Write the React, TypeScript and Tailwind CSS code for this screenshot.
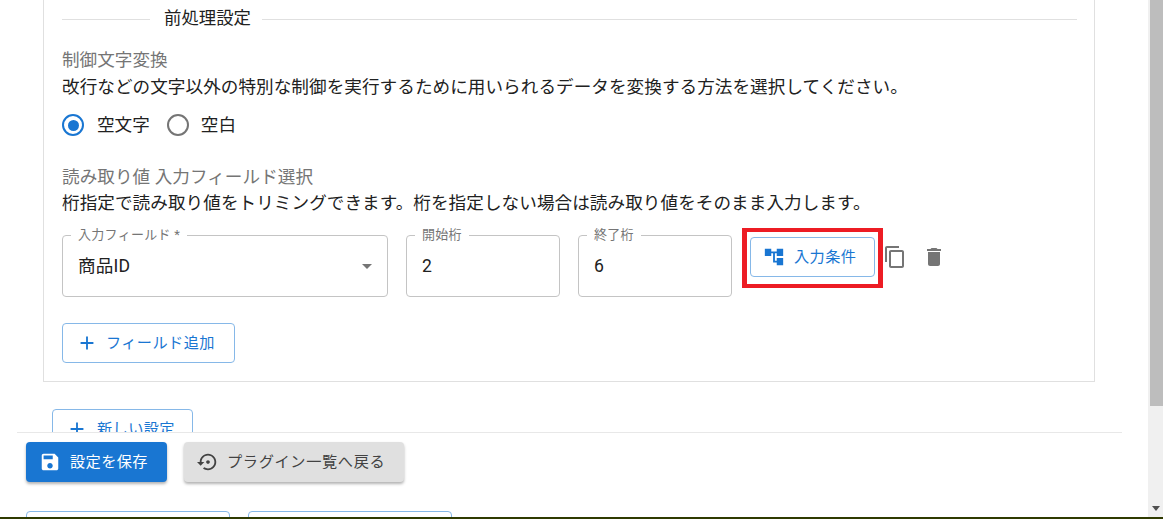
const font = '"Roboto", "Noto Sans CJK JP", sans-serif';

function MuiIcon({ d, className }: { d: string; className: string }) {
  return (
    <svg viewBox="0 0 24 24" fill="currentColor" className={className}>
      <path d={d} />
    </svg>
  );
}

const ADD = 'M19 13h-6v6h-2v-6H5v-2h6V5h2v6h6v2z';
const TREE = 'M22 11V3h-7v3H9V3H2v8h7V8h2v10h4v3h7v-8h-7v3h-2V8h2v3z';
const COPY =
  'M16 1H4c-1.1 0-2 .9-2 2v14h2V3h12V1zm3 4H8c-1.1 0-2 .9-2 2v14c0 1.1.9 2 2 2h11c1.1 0 2-.9 2-2V7c0-1.1-.9-2-2-2zm0 16H8V7h11v14z';
const TRASH = 'M6 19c0 1.1.9 2 2 2h8c1.1 0 2-.9 2-2V7H6v12zM19 4h-3.5l-1-1h-5l-1 1H5v2h14V4z';
const SAVE =
  'M17 3H5c-1.11 0-2 .9-2 2v14c0 1.1.89 2 2 2h14c1.1 0 2-.9 2-2V7l-4-4zm-5 16c-1.66 0-3-1.34-3-3s1.34-3 3-3 3 1.34 3 3-1.34 3-3 3zm3-10H5V5h10v4z';
const RESTORE =
  'M14 12c0-1.1-.9-2-2-2s-2 .9-2 2 .9 2 2 2 2-.9 2-2zm-2-9c-4.97 0-9 4.03-9 9H0l4 4 4-4H5c0-3.87 3.13-7 7-7s7 3.13 7 7-3.13 7-7 7c-1.51 0-2.91-.49-4.06-1.3l-1.42 1.44C8.04 20.3 9.94 21 12 21c4.97 0 9-4.03 9-9s-4.03-9-9-9z';

function Field({
  label,
  value,
  width,
  select,
}: {
  label: string;
  value: string;
  width: string;
  select?: boolean;
}) {
  return (
    <div className={`relative flex h-[62px] shrink-0 items-center rounded border border-[#c4c4c4] pb-[1px] pl-[15px] ${width}`}>
      <span className="absolute -top-[9px] left-[8px] bg-white px-[7px] text-[13px] leading-[16px] tracking-[0.3px] whitespace-nowrap text-[#757575]">
        {label}
      </span>
      <span className="text-[17.6px] leading-6 tracking-[0.15px] text-[#212121]">{value}</span>
      {select && (
        <MuiIcon d="M7 10l5 5 5-5z" className="absolute top-[18px] right-[8px] h-6 w-6 text-[#757575]" />
      )}
    </div>
  );
}

export default function App() {
  return (
    <div className="flex h-[519px] w-[1163px] flex-col overflow-hidden bg-white" style={{ fontFamily: font }}>
      <div className="flex min-h-0 flex-1">
        <div className="relative min-w-0 flex-1 overflow-hidden">
          <section className="mr-[53px] ml-[43px] h-[382px] border-x border-b border-[#e0e0e0] pl-[18px] pr-[17px]">
            <div className="flex h-[38px] items-center gap-[11px] pb-[1px] text-[17.4px] text-[#212121]">
              <div className="mt-[2px] h-px w-[88px] bg-[#e0e0e0]" />
              <span className="ml-[3px] whitespace-nowrap">前処理設定</span>
              <div className="mt-[2px] h-px flex-1 bg-[#e0e0e0]" />
            </div>
            <div className="mt-[9px] text-[17.6px] leading-[26px] whitespace-nowrap text-[#757575]">制御文字変換</div>
            <div className="text-[17.6px] leading-[28px] tracking-[0.05px] whitespace-nowrap text-[#212121]">
              改行などの文字以外の特別な制御を実行するために用いられるデータを変換する方法を選択してください。
            </div>
            <div className="mt-[3px] flex h-[42px] items-center text-[17.6px] text-[#212121]">
              <span className="flex h-[22px] w-[22px] items-center justify-center rounded-full border-2 border-[#1976d2]">
                <span className="h-[11px] w-[11px] rounded-full bg-[#1976d2]" />
              </span>
              <span className="ml-[13px]">空文字</span>
              <span className="ml-[17px] h-[22px] w-[22px] rounded-full border-2 border-[#757575]" />
              <span className="ml-[12px]">空白</span>
            </div>
            <div className="mt-[19px] text-[17.6px] leading-[25px] tracking-[0.05px] whitespace-nowrap text-[#757575]">読み取り値 入力フィールド選択</div>
            <div className="text-[17.6px] leading-[26px] tracking-[0.06px] whitespace-nowrap text-[#212121]">
              桁指定で読み取り値をトリミングできます。桁を指定しない場合は読み取り値をそのまま入力します。
            </div>
            <div className="mt-[19px] flex items-start">
              <Field label="入力フィールド *" value="商品ID" width="w-[326px]" select />
              <div className="ml-[18px]">
                <Field label="開始桁" value="2" width="w-[154px]" />
              </div>
              <div className="ml-[18px]">
                <Field label="終了桁" value="6" width="w-[154px]" />
              </div>
              <div className="relative mt-[2px] ml-[18px] flex h-[40px] w-[125px] items-center rounded border border-[#86b8e8] pl-[12px] text-[15.2px] text-[#1976d2]">
                <MuiIcon d={TREE} className="h-[22px] w-[22px]" />
                <span className="ml-[9px] tracking-[0.4px]">入力条件</span>
                {/* red annotation from the screenshot */}
                <div className="pointer-events-none absolute -top-[10px] -left-[9px] h-[60px] w-[141px] border-x-[5px] border-y-[4px] border-[#ed1c24]" />
              </div>
              <MuiIcon d={COPY} className="mt-[10px] ml-[8px] h-[24px] w-[24px] text-[#757575]" />
              <MuiIcon d={TRASH} className="mt-[10px] ml-[15px] h-[24px] w-[24px] text-[#757575]" />
            </div>
            <button className="mt-[26px] flex h-[40px] w-[173px] items-center rounded border border-[#86b8e8] pl-[13px] text-[15.2px] text-[#1976d2]">
              <MuiIcon d={ADD} className="h-[22px] w-[22px]" />
              <span className="ml-[8px] tracking-[0.4px]">フィールド追加</span>
            </button>
          </section>

          <button className="mt-[27px] ml-[52px] flex h-[40px] w-[141px] items-center rounded border border-[#86b8e8] pl-[13px] text-[15.2px] text-[#1976d2]">
            <MuiIcon d={ADD} className="h-[22px] w-[22px]" />
            <span className="ml-[9px] tracking-[0.4px]">新しい設定</span>
          </button>

          <footer className="absolute top-[432px] right-[26px] bottom-0 left-[17px] border-t border-[#e8e8e8] bg-white pl-[9px]">
            <div className="mt-[9px] flex gap-[17px]">
              <button className="flex h-[40px] w-[141px] items-center rounded bg-[#1976d2] pl-[13px] text-[15.2px] text-white shadow-[0_2px_3px_rgba(0,0,0,0.3)]">
                <MuiIcon d={SAVE} className="h-[22px] w-[22px]" />
                <span className="ml-[9px] tracking-[0.4px]">設定を保存</span>
              </button>
              <button className="flex h-[40px] w-[220px] items-center rounded bg-[#e0e0e0] pl-[13px] text-[15.2px] text-[#424242] shadow-[0_2px_3px_rgba(0,0,0,0.3)]">
                <MuiIcon d={RESTORE} className="h-[22px] w-[22px]" />
                <span className="ml-[8px] tracking-[0.65px]">プラグイン一覧へ戻る</span>
              </button>
            </div>
            <div className="mt-[29px] flex gap-[18px]">
              <div className="h-[30px] w-[204px] rounded border border-[#86b8e8]" />
              <div className="h-[30px] w-[204px] rounded border border-[#86b8e8]" />
            </div>
          </footer>
        </div>

        {/* browser scrollbar */}
        <div className="flex w-[15px] shrink-0 flex-col items-end bg-[#f0f0f0]">
          <div className="h-[406px] w-[13px] bg-[#bdbdbd]" />
          <div className="mt-auto mr-[3px] mb-[6px] h-0 w-0 border-x-[4px] border-t-[5px] border-x-transparent border-t-[#505050]" />
        </div>
      </div>
      <div className="h-[2px] shrink-0 bg-[#2f3a00]" />
    </div>
  );
}
